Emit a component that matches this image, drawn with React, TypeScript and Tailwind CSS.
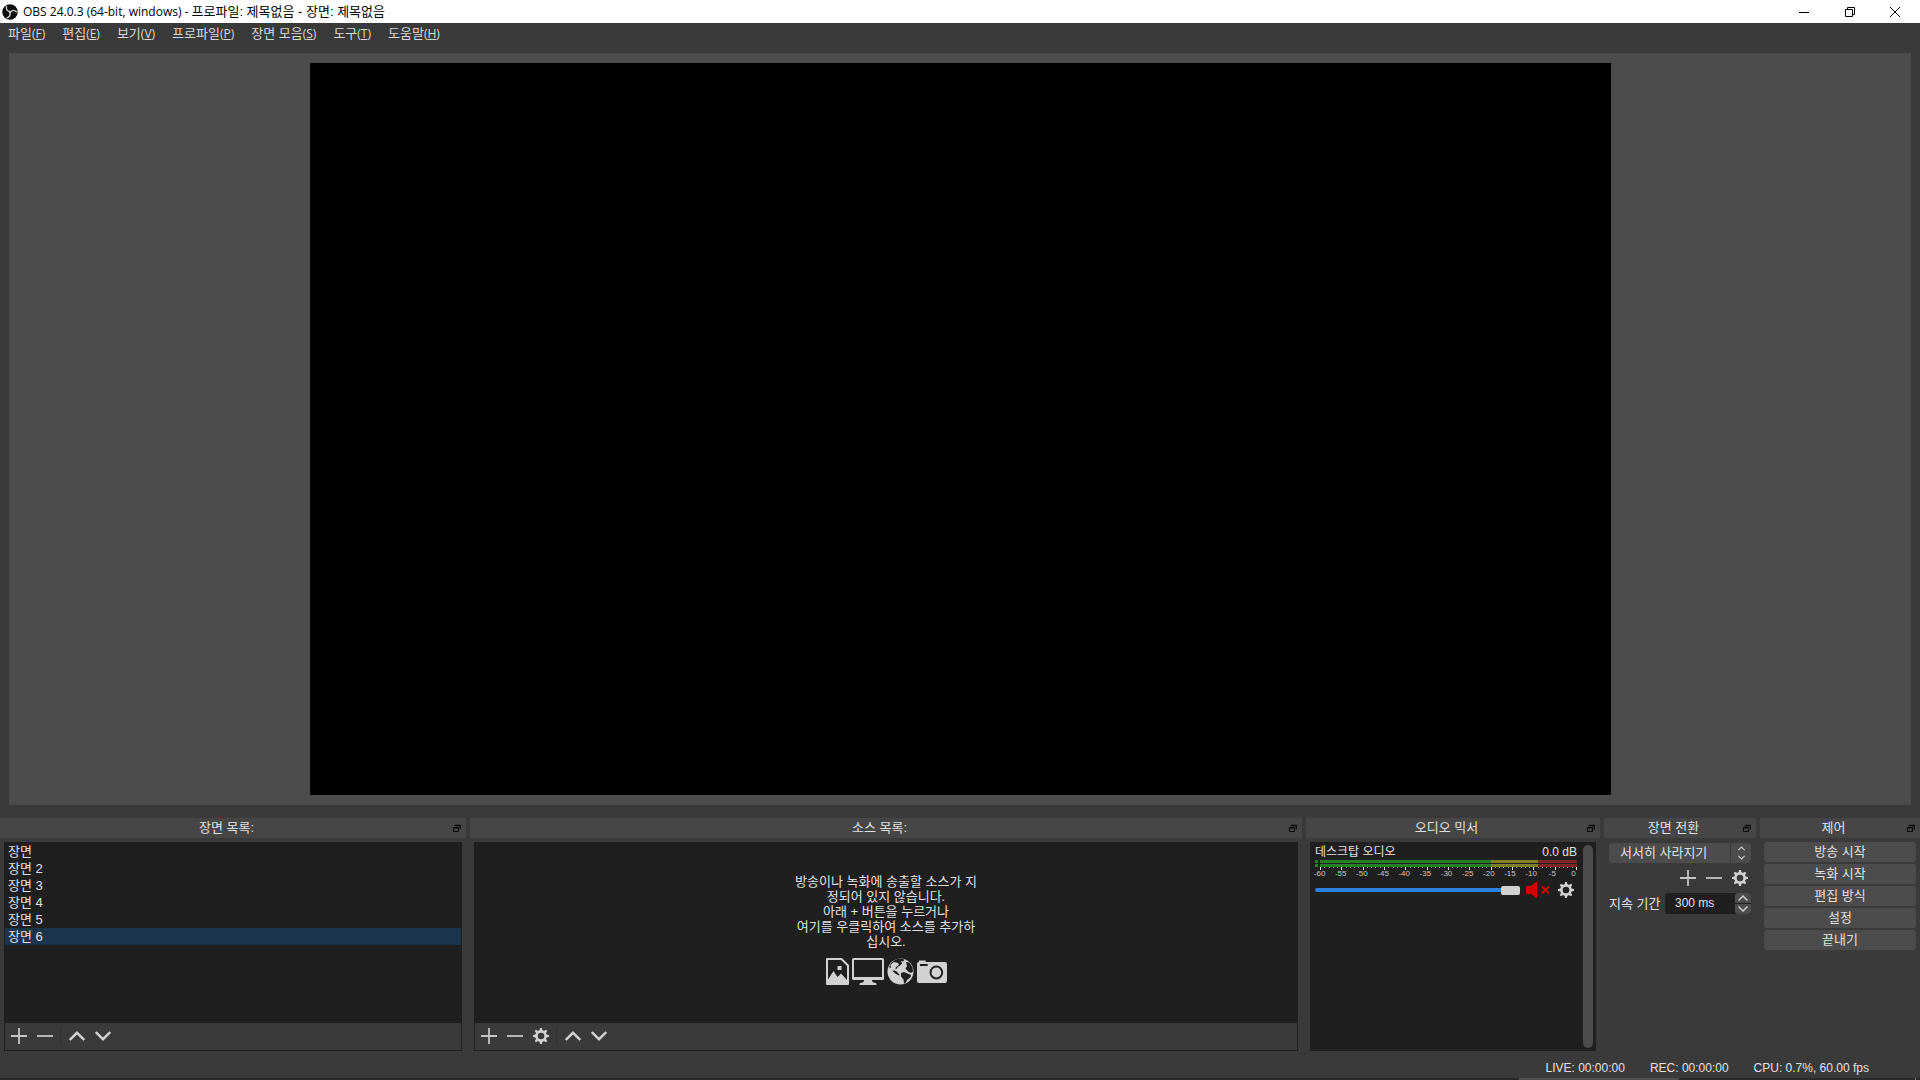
import type { ReactNode } from "react";

const hangul = "font-['Liberation_Sans','Noto_Sans_CJK_KR',sans-serif] text-[13px]";
const latin = "font-['Liberation_Sans','Noto_Sans_CJK_KR',sans-serif] text-xs";

const menus = [
  { label: "파일", hotkey: "F" },
  { label: "편집", hotkey: "E" },
  { label: "보기", hotkey: "V" },
  { label: "프로파일", hotkey: "P" },
  { label: "장면 모음", hotkey: "S" },
  { label: "도구", hotkey: "T" },
  { label: "도움말", hotkey: "H" },
];

const scenes = ["장면", "장면 2", "장면 3", "장면 4", "장면 5", "장면 6"];
const controls = ["방송 시작", "녹화 시작", "편집 방식", "설정", "끝내기"];
const levels = [-60, -55, -50, -45, -40, -35, -30, -25, -20, -15, -10, -5, 0];

function ObsLogo() {
  return (
    <svg className="size-4 shrink-0" viewBox="0 0 32 32">
      <circle cx="16" cy="16" r="15.5" fill="#0c0c0c" />
      <g fill="none" stroke="#d4d4d4" strokeWidth="2.6" strokeLinecap="round">
        <path d="M9 5c-1 5 1 9 6 10" />
        <path d="M9 5c-1 5 1 9 6 10" transform="rotate(120 16 16)" />
        <path d="M9 5c-1 5 1 9 6 10" transform="rotate(240 16 16)" />
      </g>
      <circle cx="16" cy="16" r="2.6" fill="#d4d4d4" />
    </svg>
  );
}

function PlusIcon() {
  return (
    <svg className="size-4" viewBox="0 0 16 16" fill="none" stroke="#c4c4c4" strokeWidth="1.8">
      <path d="M8 0v16M0 8h16" />
    </svg>
  );
}

function MinusIcon() {
  return (
    <svg className="size-4" viewBox="0 0 16 16" fill="none" stroke="#c4c4c4" strokeWidth="1.8">
      <path d="M0 8h16" />
    </svg>
  );
}

function ChevronIcon({ down = false, className = "size-4" }: { down?: boolean; className?: string }) {
  return (
    <svg className={className} viewBox="0 0 16 16" fill="none" stroke="#d2d2d2" strokeWidth="2.4">
      <path d={down ? "M.8 4 8 11.2 15.2 4" : "M.8 12 8 4.8 15.2 12"} />
    </svg>
  );
}

function GearIcon() {
  const teeth = [0, 45, 90, 135, 180, 225, 270, 315];
  return (
    <svg className="size-4" viewBox="0 0 16 16">
      <circle cx="8" cy="8" r="4.6" fill="none" stroke="#d2d2d2" strokeWidth="2.6" />
      {teeth.map((angle) => (
        <path key={angle} d="M6.4 3 7.1 0h1.8l.7 3z" fill="#d2d2d2" transform={`rotate(${angle} 8 8)`} />
      ))}
    </svg>
  );
}

function FloatIcon() {
  return (
    <svg className="size-2" viewBox="0 0 8 8" fill="none" stroke="#0a0a0a">
      <path d="M2.5 2.5v-1h5v3h-1M2 1.5h6" strokeWidth="1.4" />
      <path d="M.5 3.5h5v4h-5zM0 4h6" />
    </svg>
  );
}

function Dock({ title, className, children }: { title: string; className: string; children: ReactNode }) {
  return (
    <section className={`flex min-w-0 flex-col gap-1 ${className}`}>
      <header className="flex h-5 shrink-0 items-center bg-[#464646] pr-[5px]">
        <h2 className={`flex-1 text-center leading-5 ${hangul}`}>{title}</h2>
        <button aria-label={`${title} 분리`}>
          <FloatIcon />
        </button>
      </header>
      {children}
    </section>
  );
}

function Toolbar({ settings = false }: { settings?: boolean }) {
  return (
    <div className="flex h-[27px] shrink-0 items-center gap-[10px] bg-[#3a3a3a] px-[6px] pb-px">
      <button aria-label="추가"><PlusIcon /></button>
      <button aria-label="제거"><MinusIcon /></button>
      {settings && <button aria-label="속성"><GearIcon /></button>}
      <div className="-ml-[3px] -mr-[2px] h-5 w-px bg-[#323232]" />
      <button aria-label="위로"><ChevronIcon /></button>
      <button aria-label="아래로"><ChevronIcon down /></button>
    </div>
  );
}

function SourceIcons() {
  return (
    <div className="flex items-center gap-[3px] text-[#d2d2d2]">
      <svg className="h-[27px] w-[23px]" viewBox="0 0 23 27">
        <path d="M1 1h14.5L22 7.500V26H1z" fill="none" stroke="currentColor" strokeWidth="2" strokeLinejoin="round" />
        <path d="M2 25v-3.500L7.500 13l4 6 3.500-3.500 6 6.500v3z" fill="currentColor" />
        <path d="M11.500 8h4v4h-4z" fill="currentColor" />
      </svg>
      <svg className="h-[27px] w-8" viewBox="0 0 32 27">
        <rect x="1" y="1" width="30" height="19" rx="1" fill="none" stroke="currentColor" strokeWidth="2" />
        <path d="M0 19h32v1.500q0 1.500-1.500 1.500h-29Q0 22 0 20.500zM12 22h8l.5 2 4 1.500V27h-17v-1.500l4-1.500z" fill="currentColor" />
      </svg>
      <svg className="size-[27px]" viewBox="0 0 27 27">
        <circle cx="13.500" cy="13.500" r="13" fill="currentColor" />
        <path
          d="M8.500 1.500 12 .5l4 .5 1.500 1-1.500 1.500-2-.5 1 2.500-2.500 2.500-2 1-1 2-2-.5-.5 2 2 .5 2 2 1.500 1.500-.5 1-3-1.500-3-2.500-1.500-3L2 9l2-4z"
          fill="#1f1f1f"
        />
        <path d="M3.500 6.500 7 4l4 1 1 2-3 2-1 2.500-2 1.500-2-2z" fill="currentColor" />
        <path d="M14 15l3-1 3.500 1.500L24 17l-.5 2.500-3 2-2 3.500-1.500.5-.5-4-2.500-3z" fill="#1f1f1f" />
        <path d="M19 4l3.500.5 3 5 .5 4-2 1.500-3-1.500-2.500-3L20 8z" fill="#1f1f1f" />
      </svg>
      <svg className="h-[23px] w-[30px]" viewBox="0 0 31 23" preserveAspectRatio="none">
        <path d="M2 2V.5h7V2h20q2 0 2 2v17q0 2-2 2H2q-2 0-2-2V4q0-2 2-2z" fill="currentColor" />
        <path d="M3 4h8v2H3z" fill="#1f1f1f" />
        <circle cx="20" cy="12.500" r="6" fill="none" stroke="#1f1f1f" strokeWidth="2" />
      </svg>
    </div>
  );
}

function MeterScale() {
  return (
    <svg className="h-[4px] w-full" viewBox="0 0 262 4" preserveAspectRatio="none" shapeRendering="crispEdges">
      {Array.from({ length: 61 }, (_, i) => (
        <rect
          key={i}
          x={Math.round(5 + (i * 256) / 60)}
          y="0"
          width="1"
          height={i % 5 === 0 ? 3 : 1}
          fill={i % 5 === 0 ? "#e1e0e1" : "#8c8c8c"}
        />
      ))}
    </svg>
  );
}

function MeterBar() {
  return (
    <div className="flex h-[3px]">
      <div className="w-[3px] bg-[#268026]" />
      <div className="ml-[2px] flex-[171] bg-[#268026]" />
      <div className="flex-[47] bg-[#7f7f26]" />
      <div className="flex-[39] bg-[#7f2626]" />
    </div>
  );
}

function Mixer() {
  return (
    <div className="mx-1 flex flex-1 bg-[#1f1f1f] pl-[5px] pr-[3px]">
      <div className="min-w-0 flex-1">
        <div className="flex h-[18px] items-center justify-between pt-[2px]">
          <span className={`leading-4 ${latin}`}>데스크탑 오디오</span>
          <span className={`leading-4 ${latin}`}>0.0 dB</span>
        </div>
        <div className="flex flex-col gap-px">
          <MeterBar />
          <MeterBar />
        </div>
        <MeterScale />
        <div className="-ml-[6px] -mr-[7px] flex justify-between font-['Liberation_Sans',sans-serif] text-[8px] leading-[6px] text-[#c8c8c8]">
          {levels.map((level) => (
            <span key={level} className="w-[22px] text-center">{level}</span>
          ))}
        </div>
        <div className="mt-[3px] flex h-5 items-center">
          <div className="relative flex h-2 min-w-0 flex-1 items-center">
            <div className="h-1 flex-1 rounded-l-sm bg-[#2a82da]" />
            <div className="h-[9px] w-[19px] rounded-[2px] bg-[#d2d2d2]" />
            <input type="range" aria-label="데스크탑 오디오 음량" defaultValue={100} className="absolute inset-0 w-full opacity-0" />
          </div>
          <button aria-label="음소거" className="ml-[6px]">
            <svg className="h-4 w-6" viewBox="0 0 24 16">
              <path d="M0 4h5l5-4h1v16h-1l-5-4H0z" fill="#d40000" />
              <path d="m16 4.500 7 7m0-7-7 7" stroke="#d40000" strokeWidth="2" />
            </svg>
          </button>
          <button aria-label="오디오 설정" className="ml-2 mr-[3px]"><GearIcon /></button>
        </div>
      </div>
      <div className="my-[3px] ml-[6px] w-[10px] rounded-full bg-[#4c4c4c]" />
    </div>
  );
}

function Transitions() {
  return (
    <div className="flex flex-col px-[5px] pt-px">
      <div className="relative flex h-5">
        <select aria-label="장면 전환 효과" className={`min-w-0 flex-1 appearance-none rounded-[3px] bg-[#4c4c4c] pl-[11px] leading-5 ${hangul}`}>
          <option>서서히 사라지기</option>
        </select>
        <div className="pointer-events-none absolute inset-y-0 right-0 flex w-[21px] flex-col items-center justify-center gap-[2px] border-l border-[#3a3a3a]">
          <ChevronIcon className="size-[7px]" />
          <ChevronIcon down className="size-[7px]" />
        </div>
      </div>
      <div className="flex h-[30px] items-center justify-end gap-[10px] pr-[3px]">
        <button aria-label="전환 추가"><PlusIcon /></button>
        <button aria-label="전환 제거"><MinusIcon /></button>
        <button aria-label="전환 속성"><GearIcon /></button>
      </div>
      <div className="flex h-[21px] items-center">
        <label htmlFor="duration" className={`w-14 shrink-0 whitespace-nowrap leading-5 ${hangul}`}>지속 기간</label>
        <input id="duration" defaultValue="300 ms" className={`h-full min-w-0 flex-1 rounded-l-[3px] bg-[#1f1f1f] pb-[2px] pl-[10px] ${latin}`} />
        <div className="flex h-full w-4 flex-col gap-px bg-[#1f1f1f]">
          <button aria-label="늘리기" className="flex flex-1 items-center justify-center rounded-t-[3px] bg-[#4c4c4c]"><ChevronIcon className="size-[10px]" /></button>
          <button aria-label="줄이기" className="flex flex-1 items-center justify-center rounded-b-[3px] bg-[#4c4c4c]"><ChevronIcon down className="size-[10px]" /></button>
        </div>
      </div>
    </div>
  );
}

export default function App() {
  return (
    <div className={`flex h-screen flex-col overflow-hidden bg-[#3a3a3a] text-[#e1e0e1] ${hangul}`}>
      <div className="flex h-[23px] shrink-0 items-center bg-white pl-[2px] pr-[2px] text-black">
        <ObsLogo />
        <h1 className="ml-[5px] flex-1 font-['Open_Sans','Noto_Sans_CJK_KR',sans-serif] text-xs leading-5">
          OBS 24.0.3 (64-bit, windows) - <span className={hangul}>프로파일: 제목없음 - 장면: 제목없음</span>
        </h1>
        <div className="flex h-5 items-center">
          <button aria-label="최소화" className="flex w-[46px] justify-center">
            <svg className="size-[10px]" viewBox="0 0 10 10" stroke="#000"><path d="M0 5.500h10" /></svg>
          </button>
          <button aria-label="이전 크기로" className="flex w-[45px] justify-center">
            <svg className="size-[10px]" viewBox="0 0 10 10" fill="none" stroke="#000"><path d="M.5 2.500h7v7h-7zM2.500 2.500v-2h7v7h-2" /></svg>
          </button>
          <button aria-label="닫기" className="flex w-[46px] justify-center">
            <svg className="size-[10px]" viewBox="0 0 10 10" stroke="#000"><path d="m0 0 10 10M10 0 0 10" /></svg>
          </button>
        </div>
      </div>

      <nav className="flex h-[22px] shrink-0 items-center gap-[17px] pl-2 text-[#d8d8d8]">
        {menus.map((menu) => (
          <button key={menu.hotkey} className="whitespace-nowrap leading-5">
            {menu.label}
            <span className="font-['Open_Sans',sans-serif] text-xs leading-5">
              (<span className="underline">{menu.hotkey}</span>)
            </span>
          </button>
        ))}
      </nav>

      <main className="mx-[9px] mb-[13px] mt-2 flex min-h-0 flex-1 justify-center bg-[#4c4c4c] py-[10px] pl-px">
        <div className="aspect-video h-full bg-black" />
      </main>

      <div className="flex h-[233px] shrink-0 gap-1">
        <Dock title="장면 목록:" className="flex-[466]">
          <div className="mx-1 flex flex-1 flex-col border border-[#1f1f1f] bg-[#1f1f1f]">
            <ul className="flex-1">
              {scenes.map((scene, i) => (
                <li key={scene} className={`h-[17px] pl-[3px] leading-[17px] ${i === 5 ? "bg-[#1a344c]" : ""}`}>
                  {scene}
                </li>
              ))}
            </ul>
            <Toolbar />
          </div>
        </Dock>

        <Dock title="소스 목록:" className="flex-[832]">
          <div className="mx-1 flex flex-1 flex-col border border-[#1f1f1f] bg-[#1f1f1f]">
            <div className="flex flex-1 flex-col items-center justify-center gap-[9px] pb-2">
              <p className="text-center leading-[15px]">
                방송이나 녹화에 송출할 소스가 지<br />
                정되어 있지 않습니다.<br />
                아래 + 버튼을 누르거나<br />
                여기를 우클릭하여 소스를 추가하<br />
                십시오.
              </p>
              <SourceIcons />
            </div>
            <Toolbar settings />
          </div>
        </Dock>

        <Dock title="오디오 믹서" className="flex-[294]">
          <Mixer />
        </Dock>

        <Dock title="장면 전환" className="flex-[152]">
          <Transitions />
        </Dock>

        <Dock title="제어" className="flex-[160]">
          <div className="mx-1 flex flex-col gap-[2px]">
            {controls.map((label) => (
              <button key={label} className="h-5 rounded-[3px] bg-[#4c4c4c] leading-5">{label}</button>
            ))}
          </div>
        </Dock>
      </div>

      <footer className={`flex h-[27px] shrink-0 items-center justify-end gap-[25px] pr-[51px] pt-[6px] ${latin}`}>
        <span>LIVE: 00:00:00</span>
        <span>REC: 00:00:00</span>
        <span>CPU: 0.7%, 60.00 fps</span>
      </footer>
      <div className="flex h-[2px] shrink-0 justify-end bg-[#2a282a] pr-1">
        <div className="mr-[236px] w-40 bg-[#4f4f4f]" />
        <div className="w-px bg-[#808080]" />
      </div>
    </div>
  );
}
